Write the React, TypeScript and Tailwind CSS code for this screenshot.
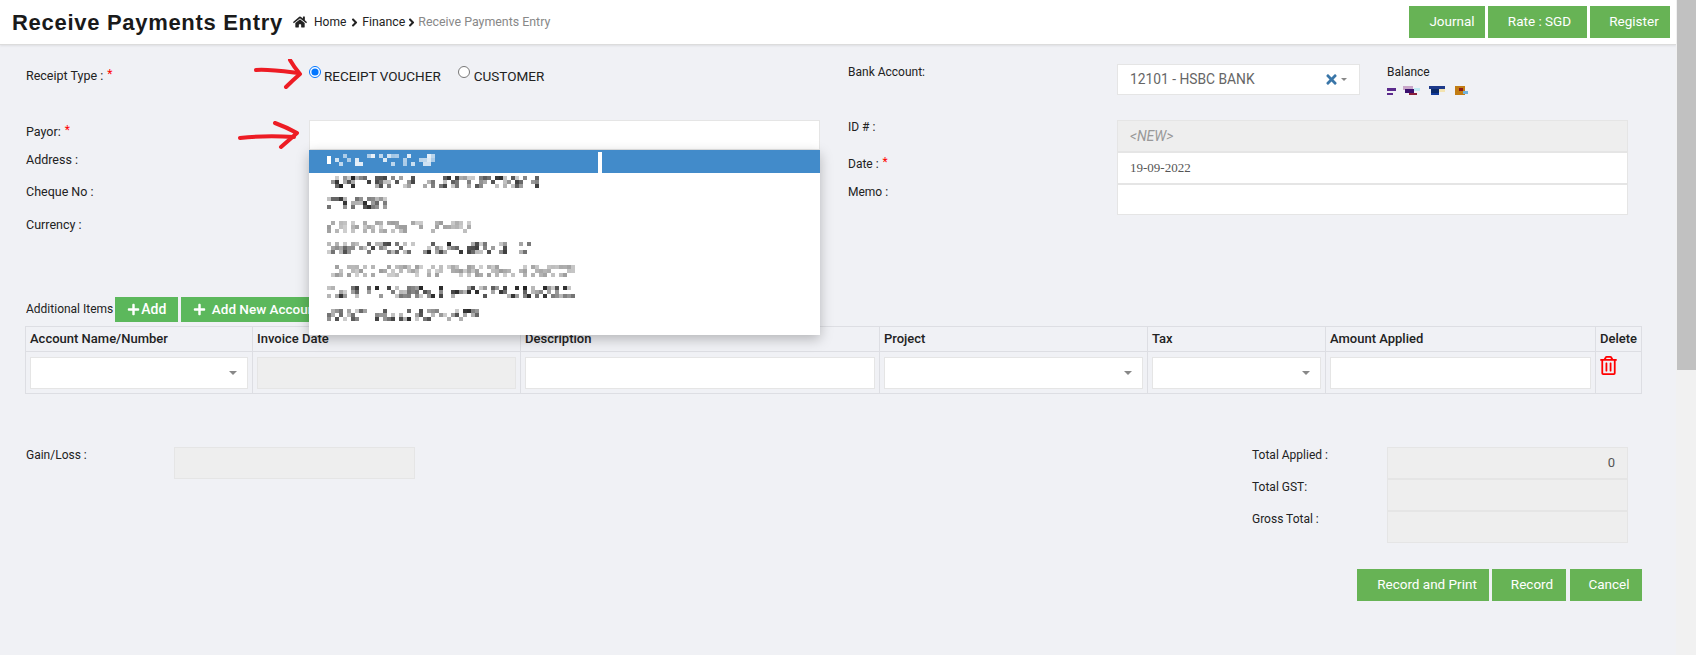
import { FaHome, FaTimes, FaRegTrashAlt, FaPlus, FaAngleRight } from "react-icons/fa";

const fieldBase = "border border-[#e5e5e5] h-[32px] px-3 flex items-center";

function Caret({ small }: { small?: boolean }) {
  if (small) {
    return <span className="inline-block w-0 h-0 border-l-[3px] border-r-[3px] border-t-[3px] border-l-transparent border-r-transparent border-t-[#888]" />;
  }
  return <span className="inline-block w-0 h-0 border-l-[4px] border-r-[4px] border-t-[4px] border-l-transparent border-r-transparent border-t-[#888]" />;
}

function Req() {
  return <span className="text-[#ff0000] text-[12px] relative -top-[2px] ml-[1px]">*</span>;
}

// pixelated (censored) text in the reference
function Mosaic({ width, seed, light, white }: { width: number; seed: number; light?: boolean; white?: boolean }) {
  const cells: { x: number; y: number; o: number }[] = [];
  let s = seed;
  for (let x = 0; x < width; x += 4) {
    for (let y = 0; y < 12; y += 4) {
      s = (s * 9301 + 49297) % 233280;
      const r = s / 233280;
      if (r < (white ? 0.6 : 0.48)) continue;
      cells.push({ x, y, o: light ? r * 0.45 : r * r });
    }
  }
  return (
    <svg width={width} height={12} className="block">
      {white && <rect x={0} y={2} width={4} height={8} fill="#fff" />}
      {cells.map((c, i) => (
        <rect key={i} x={c.x} y={c.y} width={4} height={4} fill={white ? "#fff" : "#222"} opacity={white ? 0.3 + c.o * 0.6 : c.o} />
      ))}
    </svg>
  );
}

function BalanceMosaic() {
  const rects: [number, number, number, number, string][] = [
    [0, 2, 9, 3, "#5b2a8c"], [0, 7, 6, 2, "#5b2a8c"],
    [16, 0, 10, 4, "#c9a6c9"], [18, 3, 9, 4, "#3a0f6e"], [22, 7, 8, 2, "#8a1f3a"], [27, 2, 6, 3, "#bfe9f2"],
    [42, 0, 16, 3, "#1e3a8a"], [44, 3, 8, 4, "#0b2a6b"], [52, 3, 6, 3, "#f3e3b0"], [44, 7, 8, 2, "#123a9a"],
    [68, 0, 10, 9, "#c27c12"], [72, 2, 4, 3, "#8b1a1a"], [76, 5, 5, 3, "#6fb1dd"],
  ];
  return (
    <svg width={82} height={10} className="block">
      {rects.map((r, i) => <rect key={i} x={r[0]} y={r[1]} width={r[2]} height={r[3]} fill={r[4]} />)}
    </svg>
  );
}

function RedArrow({ className, d1, d2 }: { className: string; d1: string; d2: string }) {
  return (
    <svg width="64" height="32" viewBox="0 0 64 32" className={className} fill="none" stroke="#ed1c24" strokeWidth="4" strokeLinecap="round" strokeLinejoin="round">
      <path d={d1} />
      <path d={d2} />
    </svg>
  );
}

const dropdownRows = [
  { w: 110, seed: 7, white: true, gap: 4 },
  { w: 212, seed: 21, gap: 3 },
  { w: 60, seed: 33, gap: 9 },
  { w: 144, seed: 47, light: true, gap: 12 },
  { w: 204, seed: 59, gap: 9 },
  { w: 248, seed: 71, light: true, gap: 11 },
  { w: 248, seed: 83, gap: 9 },
  { w: 152, seed: 97, gap: 11 },
];

const tableCols = [
  { label: "Account Name/Number", w: "w-[227px]", kind: "select" },
  { label: "Invoice Date", w: "w-[268px]", kind: "disabled" },
  { label: "Description", w: "w-[359px]", kind: "input" },
  { label: "Project", w: "w-[268px]", kind: "select" },
  { label: "Tax", w: "w-[178px]", kind: "select" },
  { label: "Amount Applied", w: "w-[270px]", kind: "input" },
];

export default function App() {
  return (
    <div className="w-[1696px] h-[655px] flex overflow-hidden bg-[#f0f1f5] text-[12px] text-[#222] font-['Roboto',sans-serif]">
      <div className="w-[1676px] shrink-0">
        {/* Header */}
        <header className="h-[45px] bg-white border-b border-[#dcdcdc] shadow-[0_1px_2px_rgba(0,0,0,0.08)] flex items-center pl-[12px] pr-[6px]">
          <h1 className="text-[22px] font-bold text-[#1a1a1a] tracking-[0.7px] font-['Liberation_Sans',sans-serif] mr-[10px]">Receive Payments Entry</h1>
          <FaHome className="text-[14px] text-[#222] mr-[7px]" />
          <span className="text-[12px] text-[#222]">Home</span>
          <FaAngleRight className="ml-[2px] mr-[1px] text-[13px]" />
          <span className="text-[12.3px] text-[#222]">Finance</span>
          <FaAngleRight className="text-[13px]" />
          <span className="text-[12.4px] text-[#888]">Receive Payments Entry</span>
          <div className="ml-auto flex gap-[3px] text-white text-[13.5px]">
            <button className="w-[76px] h-[32px] bg-[#67b355] pl-[10px] pb-[2px]">Journal</button>
            <button className="w-[99px] h-[32px] bg-[#67b355] pl-[4px] pb-[2px]">Rate : SGD</button>
            <button className="w-[80px] h-[32px] bg-[#67b355] pl-[8px] pb-[2px]">Register</button>
          </div>
        </header>

        <div className="pl-[26px]">
          {/* Top form */}
          <div className="h-[252px] flex">
            <div className="w-[822px] shrink-0 pt-[19px]">
              <div className="h-[56px] flex relative">
                <div className="w-[283px] pt-[4px] leading-4 text-[12.5px]">Receipt Type : <Req /></div>
                <div className="flex items-start pt-[2px] leading-4 text-[13.5px]">
                  <input type="radio" defaultChecked name="rtype" className="w-[12px] h-[12px] accent-[#0075ff]" />
                  <span className="ml-[3px] mt-[2px] mr-[17px]">RECEIPT VOUCHER</span>
                  <input type="radio" name="rtype" className="w-[12px] h-[12px]" />
                  <span className="ml-[4px] mt-[2px]">CUSTOMER</span>
                </div>
                <RedArrow className="absolute left-[226px] top-[-5px]" d1="M4 11 C16 10 30 12 46 14" d2="M38 1 Q42 8 48 15 Q40 22 34 28" />
              </div>
              <div className="flex relative">
                <div className="w-[283px] leading-4">
                  <div className="h-[32px] pt-[4px] text-[12.5px]">Payor: <Req /></div>
                  <div className="h-[32px] text-[12.5px]">Address :</div>
                  <div className="h-[33px] text-[12.5px]">Cheque No :</div>
                  <div className="h-[32px] text-[12.5px]">Currency :</div>
                </div>
                <div className="relative w-[511px] h-[30px] bg-white border border-[#e5e5e5]">
                  {/* open dropdown */}
                  <div className="absolute left-[-1px] top-[29px] w-[511px] h-[185px] bg-white shadow-[0_4px_12px_rgba(0,0,0,0.25)] z-10">
                    {dropdownRows.map((row, i) => (
                      <div key={i} className={`pl-[18px] ${i === 0 ? "h-[23px] bg-[#428bca] relative" : ""}`} style={{ paddingTop: row.gap }}>
                        <Mosaic width={row.w} seed={row.seed} light={row.light} white={row.white} />
                        {i === 0 && <span className="absolute left-[289px] top-[2px] bottom-0 w-[4px] bg-white" />}
                      </div>
                    ))}
                  </div>
                </div>
                <RedArrow className="absolute left-[212px] top-[1px]" d1="M2 17 C20 15 38 15 56 16" d2="M37 2 Q48 6 59 12 Q50 20 43 26" />
              </div>
            </div>

            <div className="flex-1 pt-[19px]">
              <div className="h-[56px] flex">
                <div className="w-[269px] leading-4">Bank Account:</div>
                <div className={`${fieldBase} w-[243px] !h-[31px] bg-white text-[#666] text-[13.8px]`}>
                  <span>12101 - HSBC BANK</span>
                  <FaTimes className="ml-auto text-[15px] text-[#3a76a8]" />
                  <span className="ml-[2px] flex"><Caret small /></span>
                </div>
                <div className="ml-[27px] leading-4">
                  <div>Balance</div>
                  <div className="mt-[6px]"><BalanceMosaic /></div>
                </div>
              </div>
              <div className="flex">
                <div className="w-[269px] leading-4 -mt-[1px]">
                  <div className="h-[37px]">ID # :</div>
                  <div className="h-[28px]">Date : <Req /></div>
                  <div>Memo :</div>
                </div>
                <div className="w-[511px]">
                  <div className={`${fieldBase} bg-[#eee] italic text-[#999] text-[14px]`}>&lt;NEW&gt;</div>
                  <div className={`${fieldBase} bg-white text-[#555] text-[13px] font-['Liberation_Serif',serif]`}>19-09-2022</div>
                  <div className={`${fieldBase} bg-white !h-[31px]`} />
                </div>
              </div>
            </div>
          </div>

          {/* Additional items */}
          <div className="h-[25px] flex items-center">
            <span className="mr-[2px] -mt-[1px]">Additional Items</span>
            <button className="w-[63px] h-[25px] bg-[#5cb85c] text-white text-[14px] font-medium flex items-center justify-center gap-[1px] pb-[1px]">
              <FaPlus className="text-[13px]" />Add
            </button>
            <button className="ml-[3px] w-[150px] h-[25px] bg-[#5cb85c] text-white text-[13.5px] font-medium flex items-center justify-center gap-[6px] pb-[1px]">
              <FaPlus className="text-[13px]" />Add New Account
            </button>
          </div>

          <table className="mt-[4px] w-[1617px] table-fixed border-collapse -ml-[1px] text-[13px]">
            <thead>
              <tr className="h-[25px]">
                {tableCols.map((c) => (
                  <th key={c.label} className={`${c.w} border border-[#dddee3] px-[4px] text-left font-medium`}>{c.label}</th>
                ))}
                <th className="border border-[#dddee3] px-[4px] text-left font-medium">Delete</th>
              </tr>
            </thead>
            <tbody>
              <tr className="h-[42px]">
                {tableCols.map((c) => (
                  <td key={c.label} className="border border-[#dddee3] px-[4px] py-[4px]">
                    <div className={`h-[32px] border border-[#e5e5e5] flex items-center justify-end pr-[10px] ${c.kind === "disabled" ? "bg-[#eee]" : "bg-white"}`}>
                      {c.kind === "select" && <Caret />}
                    </div>
                  </td>
                ))}
                <td className="border border-[#dddee3] pl-[3px] align-top pt-[4px]">
                  <FaRegTrashAlt className="text-[19px] text-[#f00]" />
                </td>
              </tr>
            </tbody>
          </table>

          {/* Totals */}
          <div className="mt-[53px] flex h-[96px] leading-4">
            <div className="w-[148px]">Gain/Loss :</div>
            <div className="w-[241px] h-[32px] bg-[#eee] border border-[#e5e5e5]" />
            <div className="ml-[837px] w-[135px]">
              <div className="h-[32px]">Total Applied :</div>
              <div className="h-[32px]">Total GST:</div>
              <div>Gross Total :</div>
            </div>
            <div className="w-[241px]">
              <div className="h-[32px] bg-[#eee] border border-[#e5e5e5] flex items-center justify-end pr-[12px] text-[#555] text-[13px]">0</div>
              <div className="h-[32px] bg-[#eee] border border-[#e5e5e5]" />
              <div className="h-[32px] bg-[#eee] border border-[#e5e5e5]" />
            </div>
          </div>

          <div className="mt-[26px] w-[1616px] flex justify-end text-white text-[13.5px]">
            <button className="w-[132px] h-[32px] bg-[#67b355] pl-[8px] pb-[2px]">Record and Print</button>
            <button className="ml-[3px] w-[74px] h-[32px] bg-[#67b355] pl-[6px] pb-[2px]">Record</button>
            <button className="ml-[4px] w-[72px] h-[32px] bg-[#67b355] pl-[6px] pb-[2px]">Cancel</button>
          </div>
        </div>
      </div>

      {/* Scrollbar */}
      <div className="w-[20px] bg-[#f1f1f1]">
        <div className="h-[370px] w-[19px] bg-[#c1c1c1] ml-[1px]" />
      </div>
    </div>
  );
}
